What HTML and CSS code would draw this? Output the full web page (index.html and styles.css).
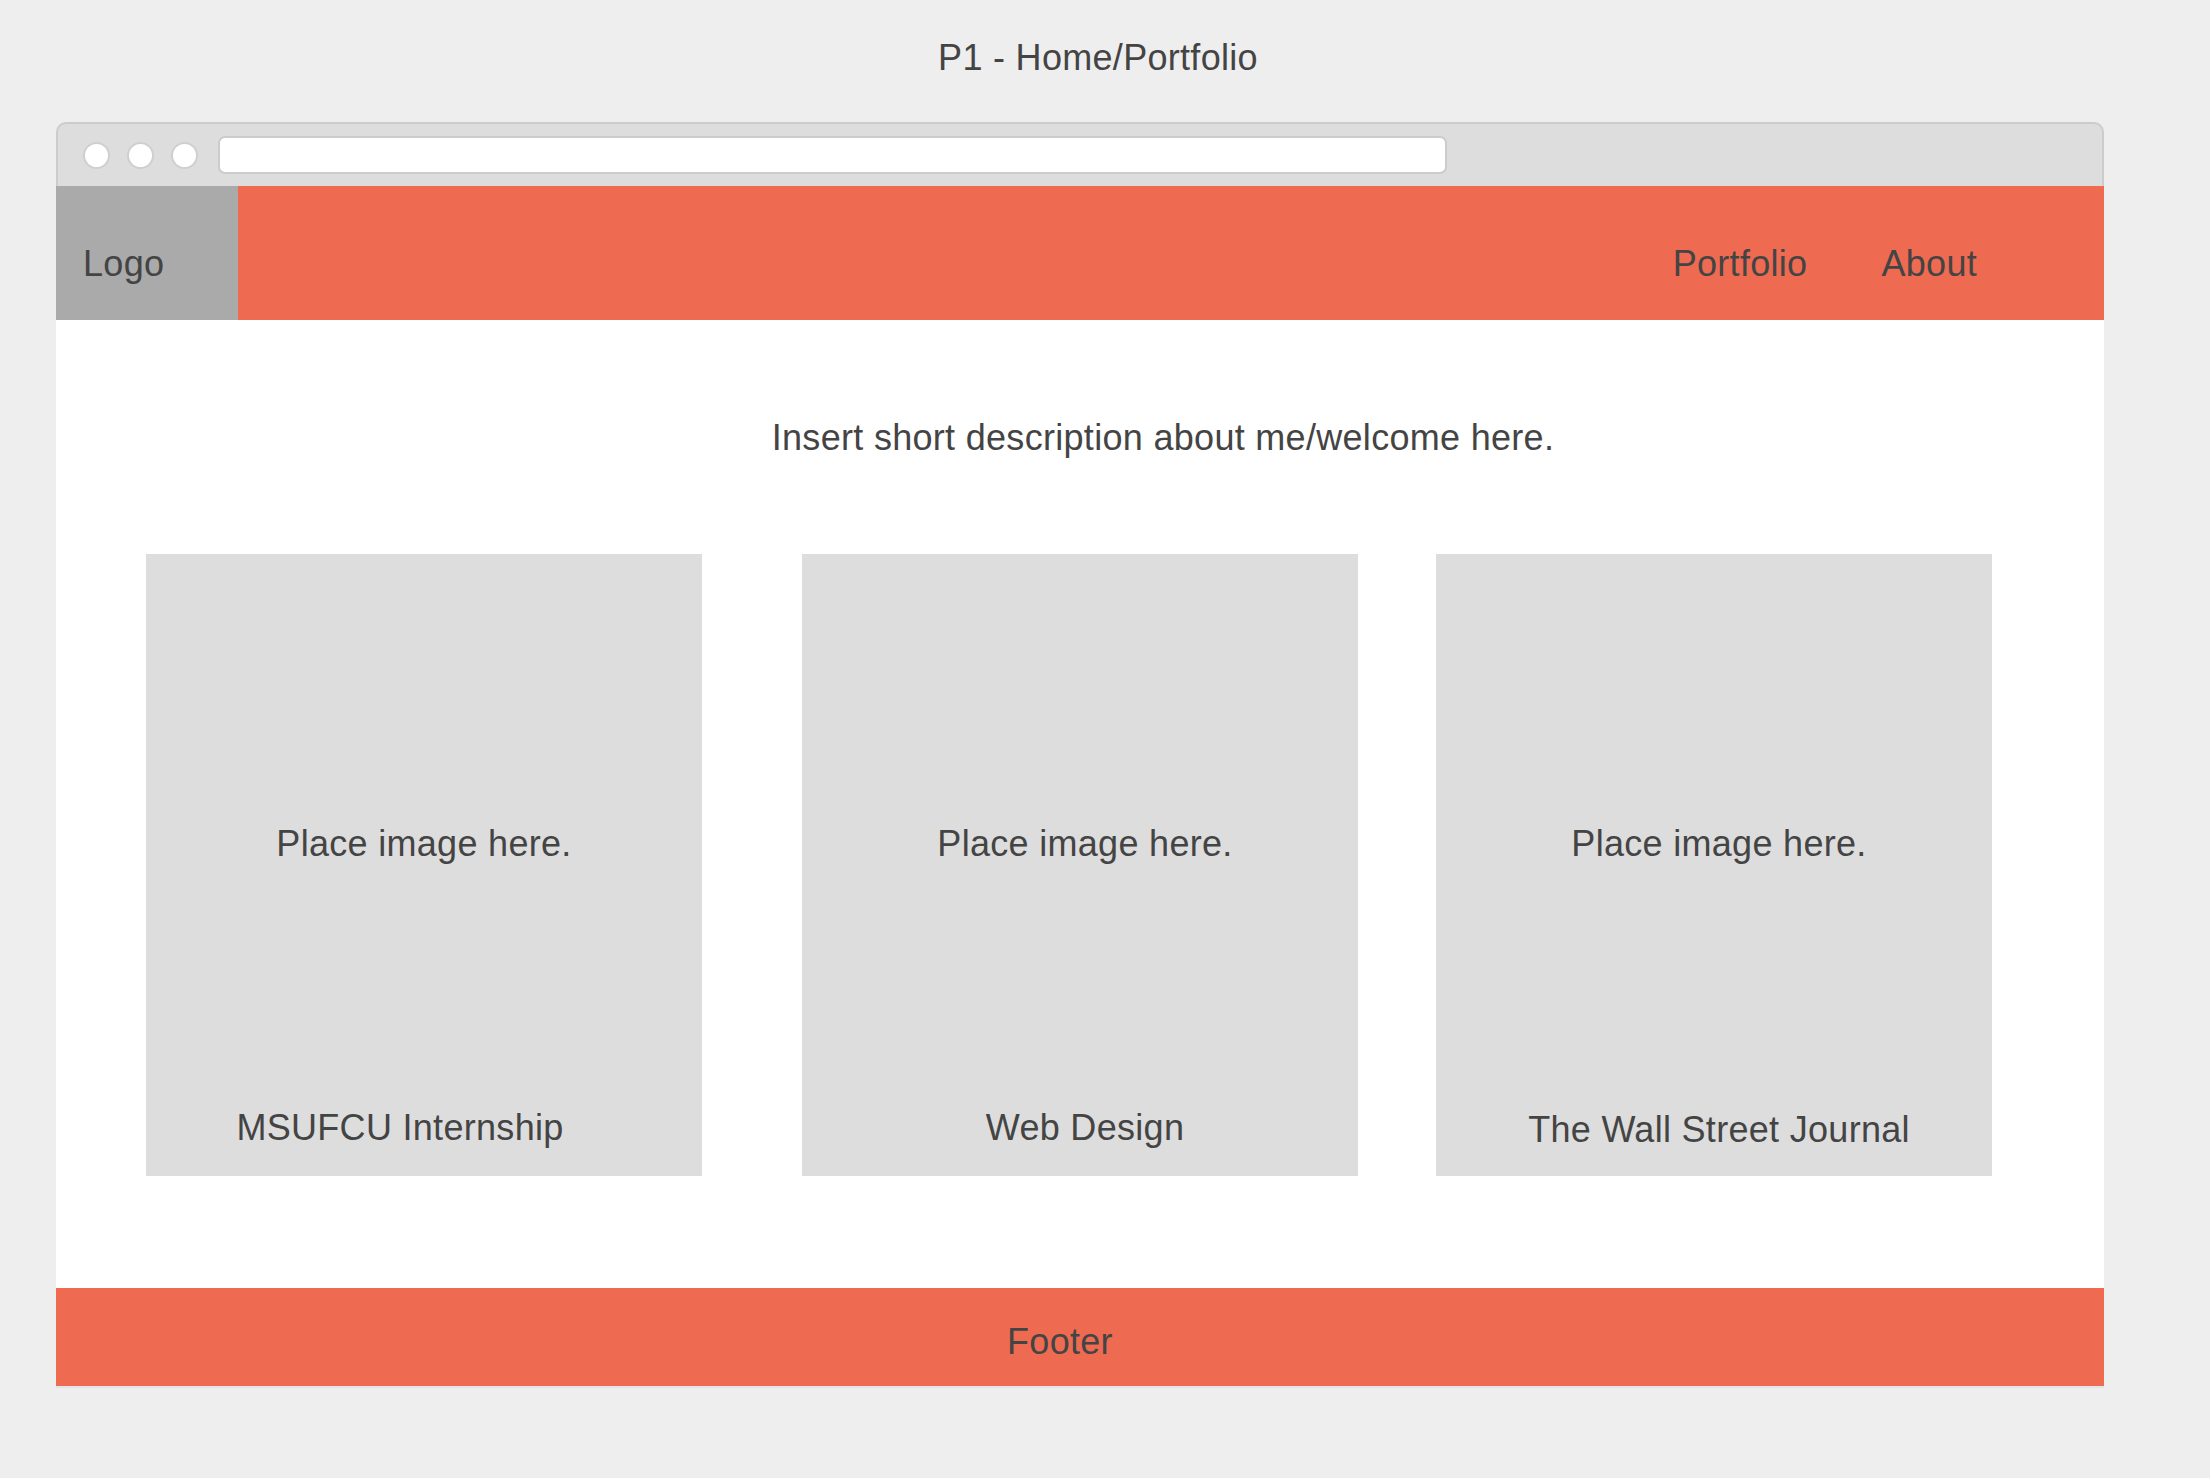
FILE: index.html
```html
<!DOCTYPE html>
<html lang="en">
<head>
<meta charset="utf-8">
<title>P1 - Home/Portfolio</title>
<link rel="stylesheet" href="styles.css">
</head>
<body>
  <h1 class="page-title">P1 - Home/Portfolio</h1>
  <div class="browser">
    <div class="chrome">
      <div class="dots">
        <span class="dot"></span>
        <span class="dot"></span>
        <span class="dot"></span>
      </div>
      <div class="url-bar"></div>
    </div>
    <header class="nav">
      <div class="logo">Logo</div>
      <nav class="links">
        <a class="link" href="#">Portfolio</a>
        <a class="link" href="#">About</a>
      </nav>
    </header>
    <main class="content">
      <p class="intro">Insert short description about me/welcome here.</p>
      <div class="cards">
        <div class="card">
          <div class="card-image">Place image here.</div>
          <div class="card-caption caption-left">MSUFCU Internship</div>
        </div>
        <div class="card card-wide-gap">
          <div class="card-image shift-right">Place image here.</div>
          <div class="card-caption shift-right">Web Design</div>
        </div>
        <div class="card card-narrow-gap">
          <div class="card-image shift-right">Place image here.</div>
          <div class="card-caption caption-low shift-right">The Wall Street Journal</div>
        </div>
      </div>
    </main>
    <footer class="footer">Footer</footer>
  </div>
</body>
</html>
```

FILE: styles.css
```css
* {
  box-sizing: border-box;
}

html, body {
  margin: 0;
  padding: 0;
}

body {
  background: #eeeeee;
  font-family: "Liberation Sans", Arial, sans-serif;
  font-size: 36px;
  line-height: 40px;
  letter-spacing: 0.3px;
  color: #444444;
  min-height: 1478px;
}

.page-title {
  margin: 0;
  padding: 38px 14px 0 0;
  font-size: 36px;
  font-weight: normal;
  line-height: 40px;
  text-align: center;
}

.browser {
  margin: 44px 0 0 56px;
  width: 2048px;
  border-bottom: 2px solid #e4e4e4;
}

.chrome {
  display: flex;
  align-items: center;
  height: 64px;
  background: #dddddd;
  border: 2px solid #cccccc;
  border-bottom: none;
  border-radius: 10px 10px 0 0;
  padding-left: 25px;
}

.dots {
  display: flex;
  gap: 17px;
}

.dot {
  display: block;
  width: 27px;
  height: 27px;
  border-radius: 50%;
  background: #ffffff;
  border: 2px solid #cfcfcf;
}

.url-bar {
  margin-left: 20px;
  width: 1229px;
  height: 38px;
  background: #ffffff;
  border: 2px solid #cccccc;
  border-radius: 7px;
}

.nav {
  display: flex;
  height: 134px;
  background: #ee6b52;
}

.logo {
  width: 182px;
  background: #aaaaaa;
  padding: 58px 0 0 27px;
}

.links {
  display: flex;
  gap: 74px;
  margin-left: auto;
  padding: 58px 127px 0 0;
}

.link {
  color: #444444;
  text-decoration: none;
}

.content {
  background: #ffffff;
  height: 968px;
  padding-top: 98px;
}

.intro {
  margin: 0;
  padding-left: 166px;
  text-align: center;
}

.cards {
  display: flex;
  padding-left: 90px;
  margin-top: 96px;
}

.card {
  display: flex;
  flex-direction: column;
  width: 556px;
  height: 622px;
  background: #dddddd;
  padding-top: 270px;
  padding-bottom: 28px;
  text-align: center;
}

.card-wide-gap {
  margin-left: 100px;
}

.card-narrow-gap {
  margin-left: 78px;
}

.card-caption {
  margin-top: auto;
}

.caption-left {
  padding-right: 48px;
}

.caption-low {
  margin-bottom: -2px;
}

.shift-right {
  padding-left: 10px;
}

.footer {
  height: 98px;
  background: #ee6b52;
  padding: 34px 40px 0 0;
  text-align: center;
}
```
